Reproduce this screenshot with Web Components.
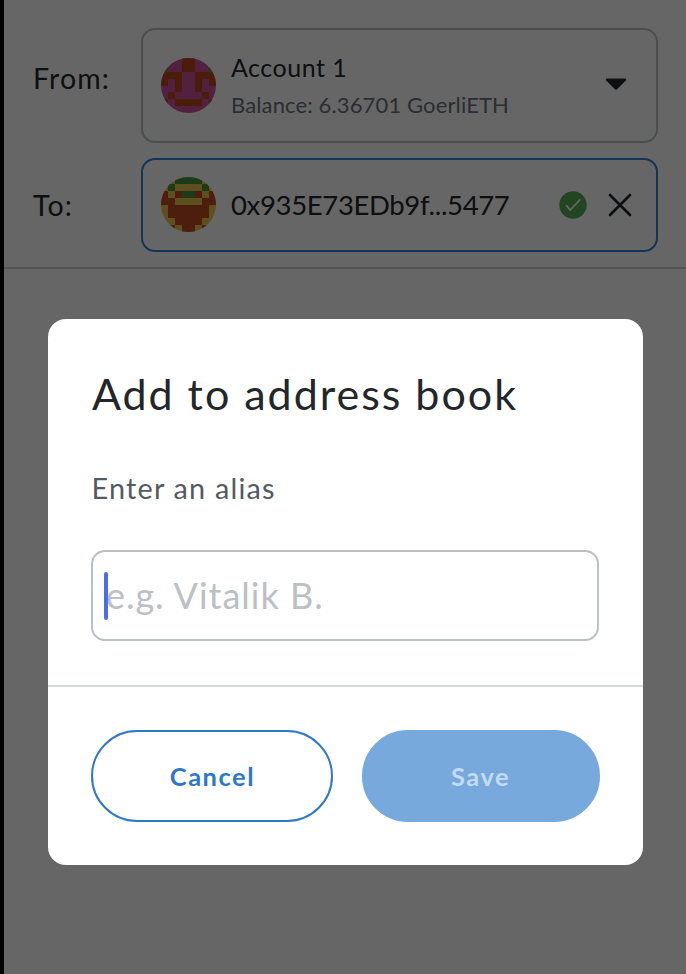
<!DOCTYPE html>
<html lang="en">
<head>
<meta charset="utf-8">
<title>Add to address book</title>
<style>
html,body{margin:0;height:100%}
body{font-family:Lato,"Open Sans",sans-serif;color:#24272a;overflow:hidden}
</style>
</head>
<body>
<send-screen>
  <address-row label="From:">
    <account-field tall>
      <block-avatar slot="avatar" palette="#cd54a0,#bd4719,#43a32d" cells="00011000 20011002 11100111 10100101 00100100 01000010 10111101 00000000"></block-avatar>
      <span slot="name" style="font-size:25px;letter-spacing:.5px">Account 1</span>
      <span slot="detail">Balance: 6.36701 GoerliETH</span>
      <svg slot="end" width="24" height="16" viewBox="0 0 24 16" style="margin:0 28px 2px 0"><path d="M3 2.6H21L12 11.6Z" fill="#24272a" stroke="#24272a" stroke-width="2.4" stroke-linejoin="round"/></svg>
    </account-field>
  </address-row>
  <address-row label="To:">
    <account-field active>
      <block-avatar slot="avatar" palette="#eac84c,#c04d23,#48963f" cells="00222200 02000020 10122101 11000011 01111110 01111110 00111100 01011010"></block-avatar>
      <span slot="name" style="font-size:27.5px;letter-spacing:-.35px">0x935E73EDb9f...5477</span>
      <svg slot="end" width="28" height="28" viewBox="0 0 28 28"><circle cx="14" cy="14" r="13.7" fill="#58ad56"/><path d="M7.5 14.5L11.3 19L20.7 9" fill="none" stroke="#fff" stroke-width="1.8" stroke-linecap="round" stroke-linejoin="round"/></svg>
      <svg slot="end" width="26" height="26" viewBox="0 0 26 26" style="margin:1px 23px 0 20.5px"><path d="M3 3L23 23M23 3L3 23" fill="none" stroke="#24272a" stroke-width="2.7" stroke-linecap="round"/></svg>
    </account-field>
  </address-row>
  <modal-dialog slot="overlay" heading="Add to address book">
    <text-field label="Enter an alias" placeholder="e.g. Vitalik B."></text-field>
    <pill-button slot="actions" style="width:242px">Cancel</pill-button>
    <pill-button slot="actions" primary style="width:238px">Save</pill-button>
  </modal-dialog>
</send-screen>
<script>
class Base extends HTMLElement{
  connectedCallback(){
    if(!this.shadowRoot)this.attachShadow({mode:'open'}).innerHTML=this.render();
  }
}
customElements.define('send-screen',class extends Base{
  render(){return `<style>
    :host{display:block;position:relative;height:974px;box-sizing:border-box;border-left:4px solid #000;background:#fff}
    header{display:flex;flex-direction:column;gap:14.5px;box-sizing:border-box;height:268.5px;padding:28px 28px 0 29px;border-bottom:2px solid #d0d3d6}
  </style><header><slot></slot></header><slot name="overlay"></slot>`}
});
customElements.define('address-row',class extends Base{
  render(){return `<style>
    :host{display:grid;grid-template-columns:108px 1fr;align-items:center}
    label{font-size:28.5px;line-height:34px;letter-spacing:1.1px;padding-bottom:${this.getAttribute('label')==='To:'?0:16}px}
  </style><label>${this.getAttribute('label')}</label><slot></slot>`}
});
customElements.define('account-field',class extends Base{
  render(){return `<style>
    :host{display:flex;align-items:center;box-sizing:border-box;height:94.5px;padding-left:18px;border:2px solid #bbc0c5;border-radius:14px}
    :host([tall]){height:115px}
    :host([active]){border-color:#2f82d4}
    .text{display:flex;flex-direction:column;flex:1;gap:8px;padding:0 0 0 15px;line-height:30px;white-space:nowrap}
    ::slotted([slot=detail]){font-size:22px;letter-spacing:.13px;color:#6a737d}
  </style><slot name="avatar"></slot><div class="text"><slot name="name"></slot><slot name="detail"></slot></div><slot name="end"></slot>`}
});
customElements.define('block-avatar',class extends Base{
  render(){
    const p=this.getAttribute('palette').split(','),rows=this.getAttribute('cells').split(' ');
    let s='';
    rows.forEach((r,y)=>[...r].forEach((c,x)=>{if(c!=='0')s+=`<rect x="${x}" y="${y}" width="1" height="1" fill="${p[c]}"/>`}));
    return `<style>:host{display:block;width:55px;height:55px;border-radius:50%;overflow:hidden;background:${p[0]}}svg{display:block}</style><svg width="55" height="55" viewBox="0 0 8 8" shape-rendering="crispEdges">${s}</svg>`}
});
customElements.define('modal-dialog',class extends Base{
  render(){return `<style>
    :host{position:absolute;inset:0;display:block;box-sizing:border-box;background:rgba(0,0,0,.6);padding:319px 43px 0 44px}
    section{box-sizing:border-box;height:546px;background:#fff;border-radius:18px;display:flex;flex-direction:column}
    .body{height:368px;box-sizing:border-box;padding:48px 44px 0 43.4px;border-bottom:2px solid #d6d9dc}
    h1{margin:0 0 0 .5px;font-size:43px;line-height:53px;font-weight:400;letter-spacing:1.98px;white-space:nowrap}
    footer{display:flex;justify-content:space-between;padding:43px 43.5px 0 43.4px}
  </style><section role="dialog"><div class="body"><h1>${this.getAttribute('heading')}</h1><slot></slot></div><footer><slot name="actions"></slot></footer></section>`}
});
customElements.define('text-field',class extends Base{
  render(){return `<style>
    :host{display:block;padding-top:50px}
    label{display:block;font-size:28.8px;line-height:36px;letter-spacing:1.2px;color:#535a61;margin:0 0 44px .2px}
    .box{display:flex;align-items:center;height:91px;box-sizing:border-box;border:2px solid #bbc0c5;border-radius:14px;padding-left:11px}
    .caret{width:4px;height:48px;border-radius:2px;background:#4a6cf0;margin-right:-2.5px;z-index:1}
    .ph{font-size:36px;line-height:44px;letter-spacing:1px;color:#bbc0c5;white-space:nowrap;padding-bottom:1px}
  </style><label>${this.getAttribute('label')}</label><div class="box"><span class="caret"></span><span class="ph">${this.getAttribute('placeholder')}</span></div>`}
});
customElements.define('pill-button',class extends Base{
  render(){return `<style>
    :host{display:flex;align-items:center;justify-content:center;box-sizing:border-box;height:92px;border:2px solid #2f78c9;border-radius:46px;color:#2f78c9;font-size:25.5px;font-weight:700;letter-spacing:1.5px;padding-bottom:1px}
    :host([primary]){background:#78a9dc;border-color:#78a9dc;color:#c3dbf1}
  </style><slot></slot>`}
});
</script>
</body>
</html>
